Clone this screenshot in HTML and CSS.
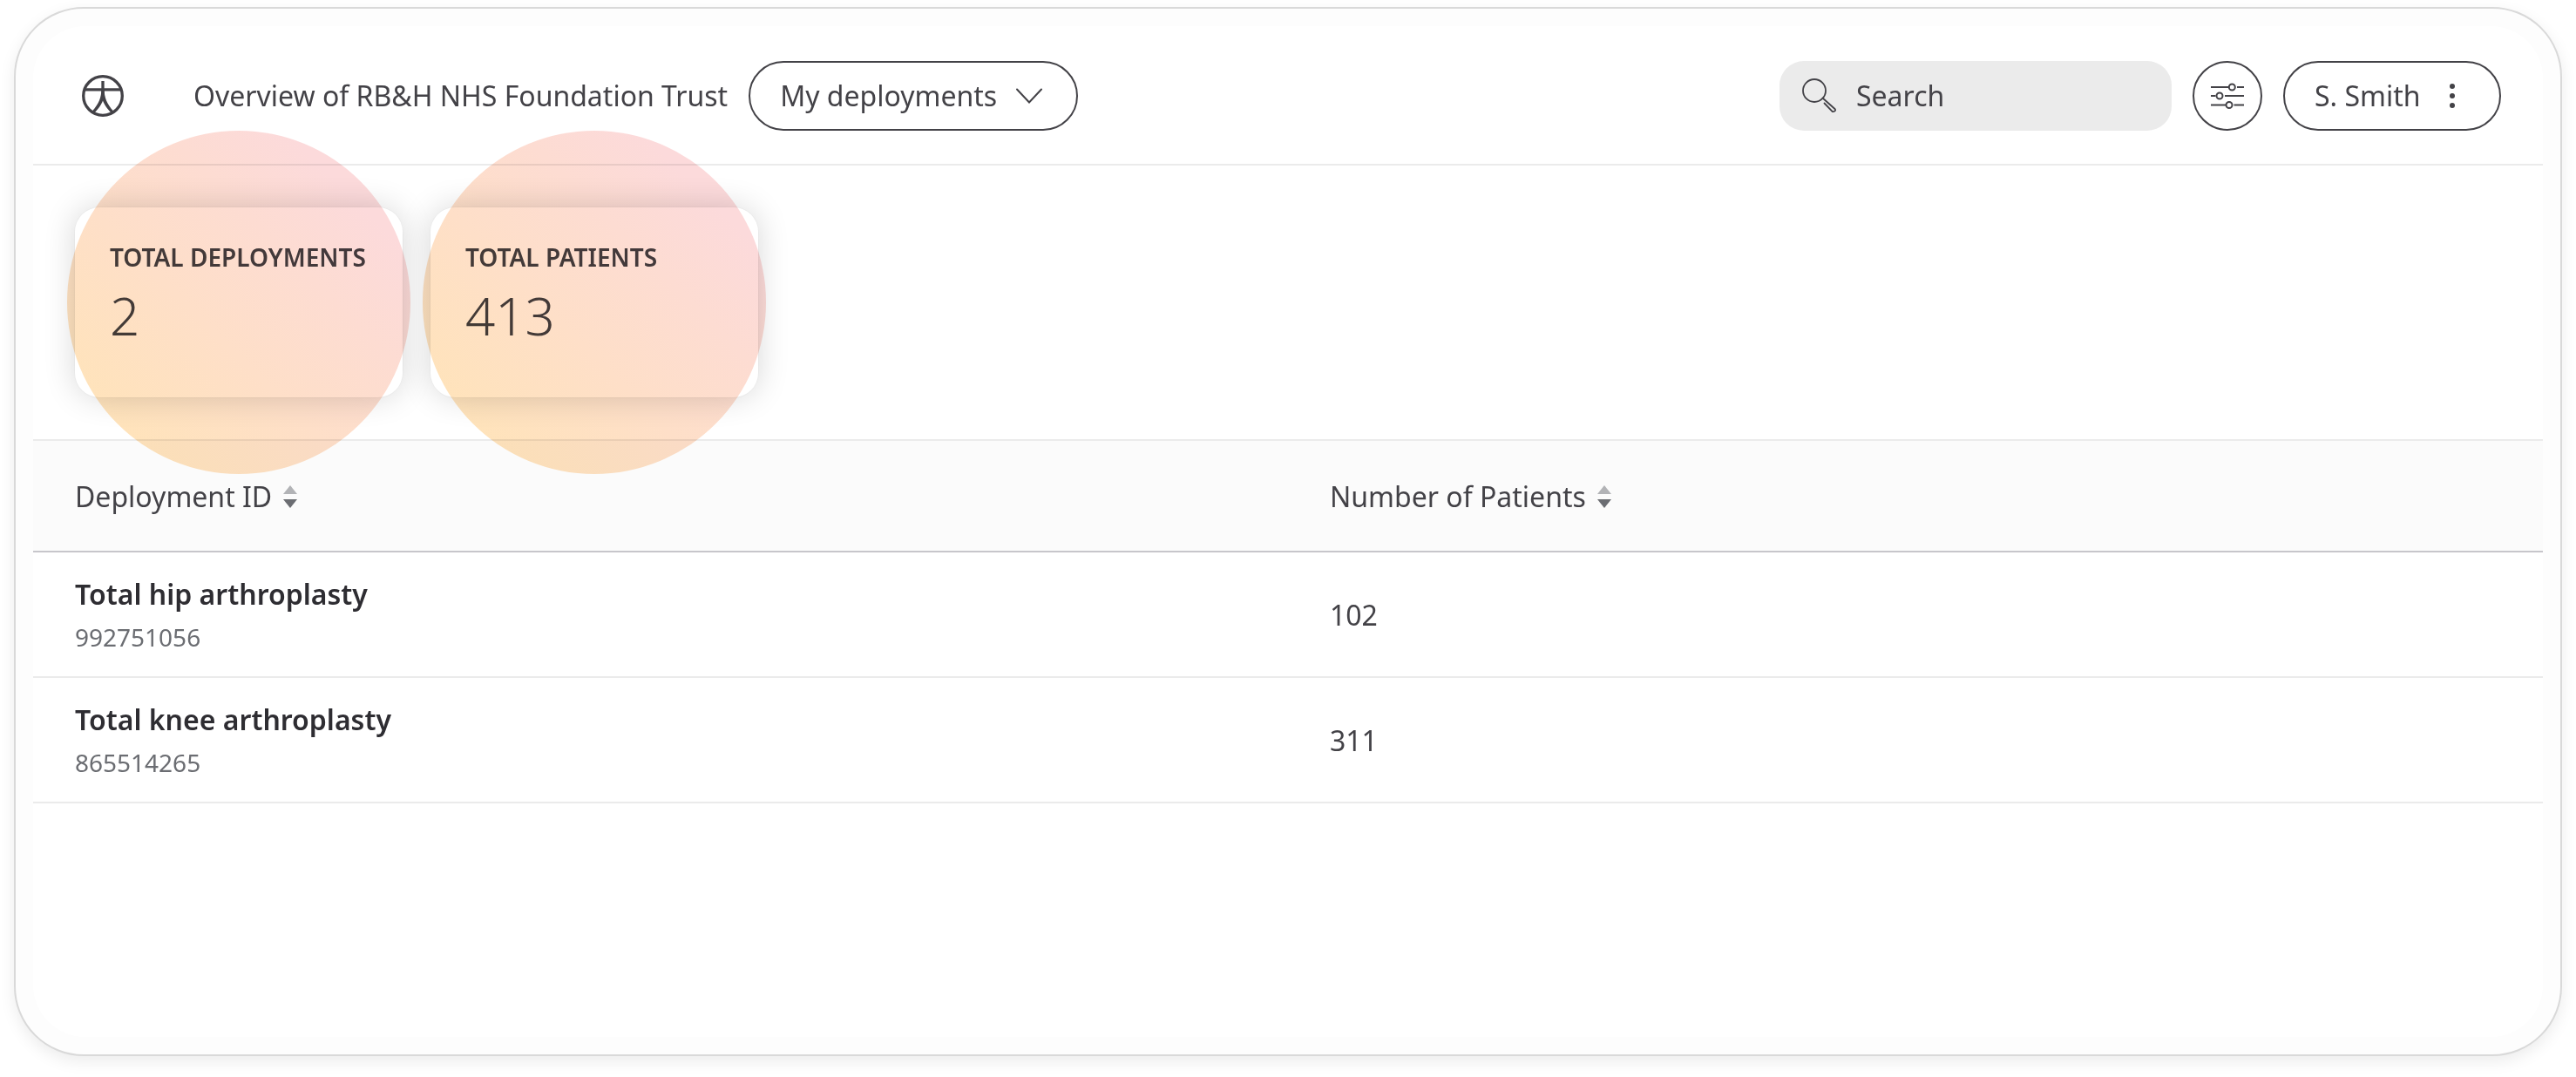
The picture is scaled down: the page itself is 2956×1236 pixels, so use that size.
FILE: index.html
```html
<!DOCTYPE html>
<html lang="en">
<head>
<meta charset="utf-8">
<meta name="viewport" content="width=device-width, initial-scale=1">
<title>Overview of RB&amp;H NHS Foundation Trust</title>
<link rel="stylesheet" href="styles.css">
</head>
<body>
<div class="frame">
  <div class="app">
    <header class="topbar">
      <a class="logo" href="#" aria-label="Home">
        <svg width="48" height="48" viewBox="0 0 48 48" fill="none" stroke="currentColor" stroke-width="3.300">
          <circle cx="24" cy="24" r="22.300"/>
          <path d="M24 7v17M3 16.800h42"/>
          <path d="M22.400 16.500h3.200c0 9 3 17 10.800 25.200l-2.600 2.100C28.500 38 25.600 34 24 29.500 22.400 34 19.500 38 14.200 43.800l-2.600-2.100C19.400 33.500 22.400 25.500 22.400 16.500z" fill="currentColor" stroke="none"/>
        </svg>
      </a>
      <h1 class="title">Overview of RB&amp;H NHS Foundation Trust</h1>
      <div class="picker">
        <select class="pill picker-select" aria-label="Deployment filter">
          <option>My deployments</option>
        </select>
        <svg class="picker-arrow" width="30" height="18" viewBox="0 0 30 18" fill="none" stroke="currentColor" stroke-width="2" stroke-linecap="round"><path d="M1 1.500l14 15 14-15"/></svg>
      </div>
      <div class="tools">
        <label class="search">
          <svg width="40" height="40" viewBox="0 0 40 40" fill="none" stroke="currentColor" stroke-width="1.800" stroke-linecap="round" stroke-linejoin="round">
            <circle cx="14" cy="14" r="13"/>
            <path d="M23.500 22.500l14 12.500q1.200 1.200 0 2.300t-2.700.8L25.500 28.500"/>
          </svg>
          <input class="search-input" type="search" placeholder="Search" aria-label="Search">
        </label>
        <button class="pill round" type="button" aria-label="Filters">
          <svg width="40" height="32" viewBox="0 0 40 32" fill="none" stroke="currentColor" stroke-width="2">
            <path d="M1 6h20.500M31 6h8M1 16h5.500M17 16h22M1 26.500h17M27.500 26.500H39"/>
            <circle cx="25.300" cy="6" r="3.500"/><circle cx="11" cy="16" r="3.500"/><circle cx="22" cy="26.500" r="3.500"/>
          </svg>
        </button>
        <button class="pill user" type="button">
          <span>S. Smith</span>
          <svg width="6" height="28" viewBox="0 0 6 28" fill="currentColor"><circle cx="3" cy="3" r="3"/><circle cx="3" cy="14" r="3"/><circle cx="3" cy="25" r="3"/></svg>
        </button>
      </div>
    </header>

    <section class="stats" aria-label="Totals">
      <div class="stat">
        <h2 class="stat-name">TOTAL DEPLOYMENTS</h2>
        <p class="stat-value">2</p>
      </div>
      <div class="stat">
        <h2 class="stat-name">TOTAL PATIENTS</h2>
        <p class="stat-value">413</p>
      </div>
    </section>

    <table class="deployments">
      <thead>
        <tr>
          <th scope="col"><button class="sort" type="button">Deployment ID
            <svg width="16" height="26" viewBox="0 0 16 26"><path d="M8 0l8 10H0z" fill="#b2b3b6"/><path d="M8 26l8-10H0z" fill="#6b6d72"/></svg></button></th>
          <th scope="col"><button class="sort" type="button">Number of Patients
            <svg width="16" height="26" viewBox="0 0 16 26"><path d="M8 0l8 10H0z" fill="#b2b3b6"/><path d="M8 26l8-10H0z" fill="#6b6d72"/></svg></button></th>
        </tr>
      </thead>
      <tbody>
        <tr>
          <td><a class="name" href="#">Total hip arthroplasty</a><span class="code">992751056</span></td>
          <td>102</td>
        </tr>
        <tr>
          <td><a class="name" href="#">Total knee arthroplasty</a><span class="code">865514265</span></td>
          <td>311</td>
        </tr>
      </tbody>
    </table>
  </div>
</div>
</body>
</html>
```
FILE: styles.css
```css
* {
  box-sizing: border-box;
}

body {
  margin: 0;
  padding: 8px 16px 24px;
  background: #fff;
  color: #434247;
  font: 32px/48px "Noto Sans", "Open Sans", sans-serif;
}

h1, h2, p {
  margin: 0;
  font-weight: 400;
}

svg {
  display: block;
  flex: none;
}

button, select, input {
  font: inherit;
  color: inherit;
}

.frame {
  display: flex;
  min-height: calc(100vh - 32px);
  padding: 20px;
  border: 2px solid #d9d9d9;
  border-radius: 80px;
  background: #fdfdfd;
  box-shadow: 0 6px 18px rgba(0, 0, 0, 0.08);
}

.app {
  flex: 1;
  min-width: 0;
  border-radius: 60px;
  background: #fff;
}

.topbar {
  display: flex;
  align-items: center;
  padding: 40px 48px 38px;
  border-bottom: 2px solid #ebebeb;
}

.logo {
  padding: 0 8px;
  color: inherit;
}

.title {
  margin: 0 24px 0 72px;
  font-size: 32px;
  white-space: nowrap;
}

.pill {
  height: 80px;
  border: 2px solid #434247;
  border-radius: 40px;
  background: #fff;
  cursor: pointer;
}

.picker {
  position: relative;
}

.picker-select {
  width: 378px;
  padding: 0 80px 0 34px;
  appearance: none;
}

.picker-arrow {
  position: absolute;
  top: 31px;
  right: 41px;
  pointer-events: none;
}

.tools {
  display: flex;
  gap: 24px;
  margin-left: auto;
}

.search {
  display: flex;
  align-items: center;
  gap: 22px;
  width: 450px;
  height: 80px;
  padding: 0 26px;
  border-radius: 28px;
  background: #ebebeb;
}

.search-input {
  flex: 1;
  min-width: 0;
  padding: 0;
  border: 0;
  outline: 0;
  background: none;
  appearance: none;
}

.search-input::placeholder {
  color: #434247;
  opacity: 1;
}

.round {
  display: grid;
  place-items: center;
  width: 80px;
  padding: 0;
}

.user {
  display: flex;
  align-items: center;
  justify-content: space-between;
  width: 250px;
  padding: 0 51px 0 34px;
}

.stats {
  display: flex;
  gap: 32px;
  padding: 48px;
}

.stat {
  position: relative;
  width: 376px;
  min-height: 218px;
  padding: 36px 40px;
  border-radius: 28px;
  background: #fff;
  box-shadow: 0 0 0 1px rgba(0, 0, 0, 0.02), 0 0 36px rgba(0, 0, 0, 0.16);
}

/* Tinted highlight disc centred over each total */
.stat::after {
  content: "";
  position: absolute;
  z-index: 1;
  top: 50%;
  left: 50%;
  width: 394px;
  height: 394px;
  margin: -197px 0 0 -197px;
  border-radius: 50%;
  background: linear-gradient(45deg, #ffe4b8 8%, #fedfc8 42%, #fddcd2 64%, #fcdadb 82%);
  mix-blend-mode: multiply;
  pointer-events: none;
}

.stat-name {
  font-size: 28px;
  line-height: 42px;
  font-weight: 600;
  white-space: nowrap;
}

.stat-value {
  margin-top: 14px;
  font-size: 60px;
  line-height: 64px;
  font-weight: 300;
}

.deployments {
  width: 100%;
  border-collapse: separate;
  border-spacing: 0;
  table-layout: fixed;
}

.deployments th {
  height: 130px;
  padding: 2px 48px 0;
  border-top: 2px solid #ebebeb;
  border-bottom: 2px solid #c7c6cb;
  background: #fbfbfb;
  text-align: left;
  font-weight: 400;
}

.sort {
  display: flex;
  align-items: center;
  gap: 13px;
  padding: 0;
  border: 0;
  background: none;
  cursor: pointer;
}

.deployments td {
  padding: 24px 48px 20px;
  border-bottom: 2px solid #ebebeb;
}

.deployments td + td {
  padding-top: 22px;
}

.name {
  display: block;
  color: #2e2d32;
  font-weight: 600;
  text-decoration: none;
}

.code {
  display: block;
  color: #6b6d72;
  font-size: 28px;
  line-height: 50px;
}
```
